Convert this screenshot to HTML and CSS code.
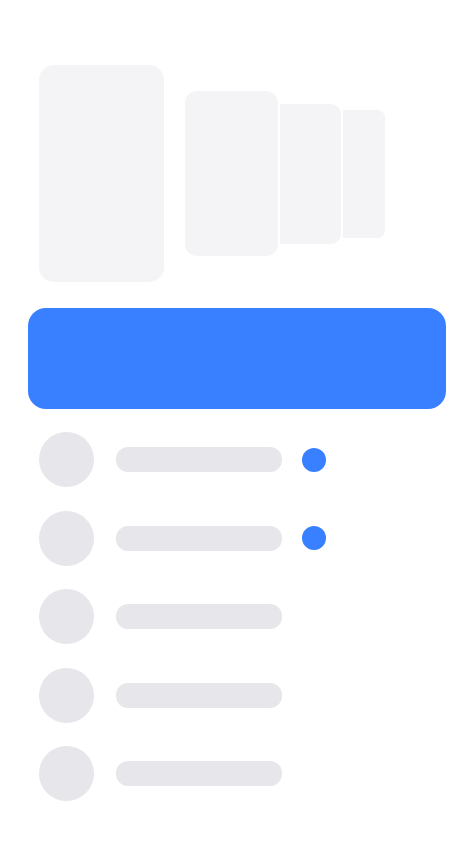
FILE: index.html
```html
<!DOCTYPE html>
<html lang="en">
<head>
<meta charset="utf-8">
<title>Skeleton</title>
<link rel="stylesheet" href="styles.css">
</head>
<body>
<main class="page">
  <section class="cards">
    <div class="card card-1"></div>
    <div class="card card-2"></div>
    <div class="card card-3"></div>
    <div class="card card-4"></div>
  </section>
  <div class="banner"></div>
  <ul class="list">
    <li class="row"><span class="avatar"></span><span class="line"></span><span class="dot"></span></li>
    <li class="row"><span class="avatar"></span><span class="line"></span><span class="dot"></span></li>
    <li class="row"><span class="avatar"></span><span class="line"></span></li>
    <li class="row"><span class="avatar"></span><span class="line"></span></li>
    <li class="row"><span class="avatar"></span><span class="line"></span></li>
  </ul>
</main>
</body>
</html>
```

FILE: styles.css
```css
html, body {
  margin: 0;
  padding: 0;
  background: #ffffff;
  font-family: "Liberation Sans", Arial, sans-serif;
}

.page {
  width: 475px;
  height: 842px;
  padding-top: 65px;
  box-sizing: border-box;
}

.cards {
  display: flex;
  align-items: center;
  margin-left: 39px;
  height: 217px;
}

.card {
  background: #f4f4f6;
  flex: none;
}

.card-1 {
  width: 125px;
  height: 217px;
  border-radius: 15px;
  margin-right: 21px;
}

.card-2 {
  width: 93px;
  height: 165px;
  border-radius: 12px;
  margin-right: 2px;
}

.card-3 {
  width: 61px;
  height: 140px;
  border-radius: 0 10px 10px 0;
  margin-right: 2px;
}

.card-4 {
  width: 42px;
  height: 128px;
  border-radius: 0 8px 8px 0;
}

.banner {
  margin: 26px 0 0 28px;
  width: 418px;
  height: 101px;
  border-radius: 18px;
  background: #3880ff;
}

.list {
  list-style: none;
  margin: 23px 0 0 39px;
  padding: 0;
  display: flex;
  flex-direction: column;
  gap: 23.5px;
}

.row {
  display: flex;
  align-items: center;
  height: 55px;
}

.avatar {
  width: 55px;
  height: 55px;
  border-radius: 50%;
  background: #e6e6eb;
  flex: none;
}

.line {
  width: 166px;
  height: 25px;
  border-radius: 12px;
  background: #e6e6eb;
  margin-left: 22px;
  flex: none;
}

.dot {
  width: 24px;
  height: 24px;
  border-radius: 50%;
  background: #3880ff;
  margin-left: 20px;
  flex: none;
}
```
